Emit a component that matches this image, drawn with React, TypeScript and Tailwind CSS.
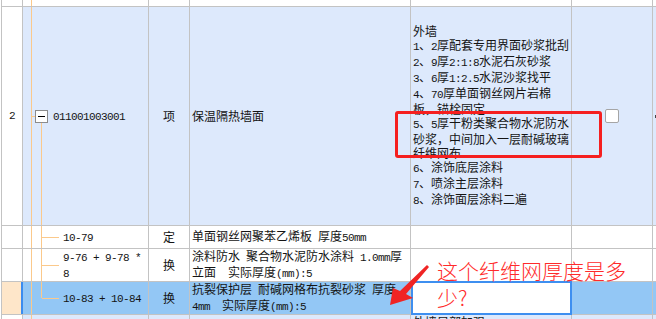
import React from "react";

const LB = "bg-[#dde9fc]";
const SEL = "bg-[#93c7f5]";
const OR = "bg-[#fbc98b]";
const row =
  "grid grid-cols-[21px_126px_41px_221px_161px_81px_1fr] border-b border-[#c3c3c3]";
const cell = "border-r border-[#c3c3c3]";

// half-width runs in a mono face, like the original's SimSun digits
function T({ s }: { s: string }) {
  const parts = s.match(/[ -~]+|[^ -~]+/g) ?? [];
  return (
    <>
      {parts.map((p, i) =>
        /^[ -~]/.test(p) ? (
          <span
            key={i}
            className="font-['Liberation_Mono',monospace] text-[11px] tracking-[-0.6px]"
          >
            {p}
          </span>
        ) : (
          <span key={i}>{p}</span>
        ),
      )}
    </>
  );
}

const Trunk = () => <div className={`w-px ${OR}`} />;

function TreeEmpty({ bg }: { bg: string }) {
  return (
    <div className={`${cell} ${bg} flex pl-[8px]`}>
      <Trunk />
    </div>
  );
}

function TreeChild({ lines, last, bg }: { lines: string[]; last?: boolean; bg: string }) {
  return (
    <div className={`${cell} ${bg} flex pl-[8px]`}>
      <Trunk />
      <div className="ml-[9px] w-px flex flex-col">
        <div className={`flex-1 ${OR}`} />
        {last && <div className="flex-1" />}
      </div>
      <div className="flex items-center">
        <div className={`w-[17px] h-px ${OR}`} />
        <div className="ml-[4px] whitespace-pre">
          {lines.map((l) => (
            <div key={l}>
              <T s={l} />
            </div>
          ))}
        </div>
      </div>
    </div>
  );
}

function Lines({ lines }: { lines: string[] }) {
  return (
    <div className="whitespace-pre">
      {lines.map((l) => (
        <div key={l}>
          <T s={l} />
        </div>
      ))}
    </div>
  );
}

const desc = [
  "外墙",
  "1、2厚配套专用界面砂浆批刮",
  "2、9厚2:1:8水泥石灰砂浆",
  "3、6厚1:2.5水泥沙浆找平",
  "4、70厚单面钢丝网片岩棉",
  "板，锚栓固定",
  "5、5厚干粉类聚合物水泥防水",
  "砂浆，中间加入一层耐碱玻璃",
  "纤维网布",
  "6、涂饰底层涂料",
  "7、喷涂主层涂料",
  "8、涂饰面层涂料二遍",
];

export default function App() {
  return (
    <div className="relative w-[656px] h-[319px] overflow-hidden bg-white font-['Noto_Sans_CJK_SC',sans-serif] text-[12px] leading-[14px] text-[#141414]">
      <div className="ml-px border-l border-[#c3c3c3]">
        {/* previous row, cut off */}
        <div className={`${row} h-[7px]`}>
          <div className={cell} />
          <TreeEmpty bg="bg-white" />
          <div className={cell} />
          <div className={cell} />
          <div className={cell} />
          <div className={cell} />
          <div />
        </div>

        {/* list item */}
        <div className={`${row} h-[219px]`}>
          <div className={`${cell} flex items-center justify-center`}>
            <T s="2" />
          </div>
          <div className={`${cell} ${LB} flex pl-[8px]`}>
            <Trunk />
            <div className="flex items-center">
              <div className={`w-[3px] h-px ${OR}`} />
              <div className="self-stretch w-[13px] flex flex-col items-center">
                <div className="flex-1" />
                <div className="w-[13px] h-[13px] border border-[#8c8c8c] bg-white flex items-center justify-center">
                  <div className="w-[7px] h-px bg-black" />
                </div>
                <div className={`flex-1 w-px ${OR}`} />
              </div>
              <div className="ml-[5px]">
                <T s="011001003001" />
              </div>
            </div>
          </div>
          <div className={`${cell} ${LB} flex items-center justify-center`}>项</div>
          <div className={`${cell} ${LB} flex items-center pl-[2px]`}>保温隔热墙面</div>
          <div className={`${cell} ${LB} flex flex-col justify-center pl-[2px]`}>
            <Lines lines={desc} />
          </div>
          <div className={`${cell} ${LB} flex items-center justify-center`}>
            <div className="w-[14px] h-[14px] rounded-[2px] border border-[#a5a5a5] bg-white" />
          </div>
          <div className={`${LB} flex items-center pl-[2px]`}>
            <div className="w-[2px] h-[3px] bg-[#444]" />
          </div>
        </div>

        {/* 10-79 */}
        <div className={`${row} h-[23px]`}>
          <div className={cell} />
          <TreeChild bg="bg-white" lines={["10-79"]} />
          <div className={`${cell} flex items-center justify-center`}>定</div>
          <div className={`${cell} flex items-center pl-[2px]`}>
            <Lines lines={["单面钢丝网聚苯乙烯板 厚度50mm"]} />
          </div>
          <div className={cell} />
          <div className={cell} />
          <div />
        </div>

        {/* 9-76 + 9-78 * 8 */}
        <div className={`${row} h-[33px]`}>
          <div className={cell} />
          <TreeChild bg="bg-white" lines={["9-76 + 9-78 *", "8"]} />
          <div className={`${cell} flex items-center justify-center`}>换</div>
          <div className={`${cell} flex items-center pl-[2px]`}>
            <Lines lines={["涂料防水 聚合物水泥防水涂料 1.0mm厚", "立面  实际厚度(mm):5"]} />
          </div>
          <div className={cell} />
          <div className={cell} />
          <div />
        </div>

        {/* selected row */}
        <div className={`${row} h-[33px]`}>
          <div className="border-r border-[#3b8cef] bg-[#fee6c9] shadow-[inset_-1px_0_0_#3b8cef]" />
          <TreeChild bg={SEL} last lines={["10-83 + 10-84"]} />
          <div className={`${cell} ${SEL} flex items-center justify-center`}>换</div>
          <div className={`${cell} ${SEL} flex items-center pl-[2px]`}>
            <Lines lines={["抗裂保护层 耐碱网格布抗裂砂浆 厚度", "4mm  实际厚度(mm):5"]} />
          </div>
          <div className={`${cell} relative bg-white`}>
            <div className="absolute -top-px left-0 -right-px -bottom-px border-2 border-[#3e8ff0]" />
          </div>
          <div className={`${cell} ${SEL}`} />
          <div className={SEL} />
        </div>

        {/* next row, cut off */}
        <div className={`${row} h-[40px]`}>
          <div className={cell} />
          <TreeEmpty bg={LB} />
          <div className={`${cell} ${LB}`} />
          <div className={`${cell} ${LB}`} />
          <div className={`${cell} ${LB} pl-[2px]`}>外墙局部加强</div>
          <div className={`${cell} ${LB}`} />
          <div className={LB} />
        </div>
      </div>

      {/* annotations drawn over the grid */}
      <div className="absolute left-[395px] top-[111px] w-[207px] h-[47px] border-[3px] border-[#f51f1f] rounded-[3px]" />
      <div className="absolute left-[437px] top-[257px] text-[21px] leading-[27px] font-light text-[#ff2b2b]">
        这个纤维网厚度是多
        <br />
        少?
      </div>
      <svg
        className="absolute left-[385px] top-[260px]"
        width="48"
        height="50"
        viewBox="0 0 48 50"
      >
        <polygon points="42,5 44,7 21,34 28,38 5,45 8,28 15,31" fill="#f02424" />
      </svg>
    </div>
  );
}
